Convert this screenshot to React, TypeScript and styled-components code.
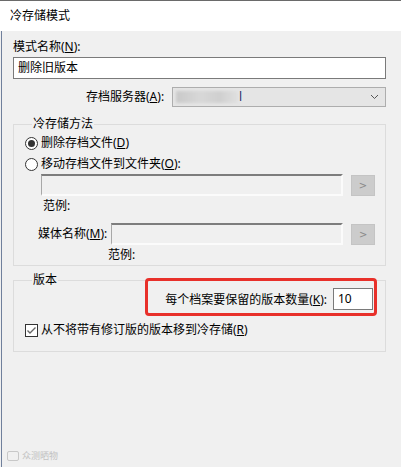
import React from "react";
import styled, { createGlobalStyle } from "styled-components";

const Global = createGlobalStyle`
  html, body { margin: 0; padding: 0; background: #f0f0f0; }
  body { font-family: "Noto Sans", "Noto Sans CJK SC", sans-serif; font-size: 12px; color: #000; }
  * { box-sizing: border-box; }
`;

const Window = styled.div`
  position: relative;
  width: 401px;
  height: 467px;
  display: flex;
  flex-direction: column;
  background: #f0f0f0;
  overflow: hidden;
`;

const TitleBar = styled.div`
  height: 31px;
  flex: none;
  background: #fff;
  border-top: 1px solid #6a6a6a;
  padding-left: 10px;
  display: flex;
  align-items: center;
  font-size: 12px;
  line-height: 16px;
`;

const Body = styled.div`
  flex: 1;
  display: flex;
  flex-direction: column;
  margin-left: 1px;
  border-left: 1px solid #70809c;
  padding: 8px 15px 0 11px;
`;

const Label = styled.div<{ $indent?: number; $mt?: number }>`
  line-height: 16px;
  padding-left: ${(p) => p.$indent ?? 0}px;
  margin-top: ${(p) => p.$mt ?? 0}px;
  white-space: nowrap;
`;

const TextInput = styled.div<{ $w?: number; $mt?: number }>`
  height: 22px;
  ${(p) => (p.$w ? `width: ${p.$w}px;` : "width: 100%;")}
  margin-top: ${(p) => p.$mt ?? 0}px;
  background: #fff;
  border: 1px solid #7a7a7a;
  padding: 0 4px;
  display: flex;
  align-items: center;
  line-height: 16px;
  font-size: 12px;
`;

const ComboRow = styled.div`
  margin-top: 8px;
  display: flex;
  align-items: center;
  gap: 4px;
  padding-left: 73px;
`;

const Combo = styled.div`
  flex: 1;
  height: 20px;
  background: #e5e5e5;
  border: 1px solid #adadad;
  display: flex;
  align-items: center;
  padding: 0 6px 0 3px;
`;

const Blurred = styled.span`
  display: inline-block;
  width: 62px;
  height: 12px;
  background: linear-gradient(90deg, #c9c9c9, #d8d8d8 40%, #cfcfcf 70%, #e0e0e0);
  filter: blur(1.5px);
`;

const ComboTail = styled.span`
  color: #1a2a66;
  font-size: 12px;
  line-height: 16px;
  margin-left: 1px;
`;

const Chevron = styled.svg`
  margin-left: auto;
  width: 9px;
  height: 6px;
`;

const Group = styled.fieldset<{ $mt: number; $pb: number }>`
  margin: ${(p) => p.$mt}px 0 0 0;
  padding: 0 10px ${(p) => p.$pb}px 11px;
  border: 1px solid #dcdcdc;
  min-width: 0;
`;

const Legend = styled.legend`
  margin-left: 7px;
  padding: 0 1px;
  line-height: 16px;
  font-size: 12px;
`;

const RadioRow = styled.label<{ $mt: number }>`
  display: flex;
  align-items: center;
  gap: 3px;
  margin-top: ${(p) => p.$mt}px;
  line-height: 16px;
`;

const Radio = styled.span<{ $checked?: boolean }>`
  width: 13px;
  height: 13px;
  border-radius: 50%;
  border: 1px solid #333;
  background: #fff;
  display: inline-flex;
  align-items: center;
  justify-content: center;
  &::after {
    content: "";
    width: 7px;
    height: 7px;
    border-radius: 50%;
    background: ${(p) => (p.$checked ? "#333" : "transparent")};
  }
`;

const FieldRow = styled.div<{ $mt: number; $pl: number }>`
  display: flex;
  align-items: center;
  margin-top: ${(p) => p.$mt}px;
  padding-left: ${(p) => p.$pl}px;
`;

const DisabledField = styled.div<{ $w: number }>`
  width: ${(p) => p.$w}px;
  height: 22px;
  background: #f0f0f0;
  border-top: 2px solid #7d7d7d;
  border-left: 1px solid #a8a8a8;
  border-right: 2px solid #fbfbfb;
  border-bottom: 2px solid #fbfbfb;
`;

const BrowseButton = styled.div`
  width: 24px;
  height: 21px;
  margin-left: 8px;
  background: #cccccc;
  border: 1px solid #c4c4c4;
  color: #8a8a8a;
  font-family: "DejaVu Sans", sans-serif;
  font-size: 10px;
  display: flex;
  align-items: center;
  justify-content: center;
`;

const InlineLabel = styled.span`
  line-height: 16px;
  margin-right: 4px;
  white-space: nowrap;
`;

const VersionRow = styled.div`
  display: flex;
  align-items: center;
  justify-content: flex-end;
  gap: 6px;
  padding-right: 2px;
`;

const CheckRow = styled.label`
  display: flex;
  align-items: center;
  gap: 3px;
  margin-top: 12px;
  line-height: 16px;
`;

const Checkbox = styled.span`
  width: 13px;
  height: 13px;
  border: 1px solid #333;
  background: #fff;
  display: inline-flex;
  align-items: center;
  justify-content: center;
`;

const Highlight = styled.div`
  position: absolute;
  left: 145px;
  top: 278px;
  width: 232px;
  height: 38px;
  border: 3.5px solid #e8302a;
  border-radius: 4px;
  pointer-events: none;
`;

const Watermark = styled.div`
  margin-top: auto;
  margin-bottom: 5px;
  margin-left: -6px;
  display: flex;
  align-items: center;
  gap: 3px;
  color: #c2c2c2;
  font-size: 9px;
  line-height: 12px;
`;

const WmIcon = styled.span`
  width: 12px;
  height: 10px;
  border: 1px solid #c8c8c8;
  border-radius: 2px;
`;

export default function App() {
  return (
    <>
      <Global />
      <Window>
        <TitleBar>冷存储模式</TitleBar>
        <Body>
          <Label>模式名称(<u>N</u>):</Label>
          <TextInput $mt={2}>删除旧版本</TextInput>
          <ComboRow>
            <InlineLabel>存档服务器(<u>A</u>):</InlineLabel>
            <Combo>
              <Blurred />
              <ComboTail>l</ComboTail>
              <Chevron viewBox="0 0 9 6">
                <path d="M1 1 L4.5 4.5 L8 1" fill="none" stroke="#555" strokeWidth="1" />
              </Chevron>
            </Combo>
          </ComboRow>

          <Group $mt={9} $pb={2}>
            <Legend>冷存储方法</Legend>
            <RadioRow $mt={3}>
              <Radio $checked />
              <span>删除存档文件(<u>D</u>)</span>
            </RadioRow>
            <RadioRow $mt={5}>
              <Radio />
              <span>移动存档文件到文件夹(<u>O</u>):</span>
            </RadioRow>
            <FieldRow $mt={2} $pl={16}>
              <DisabledField $w={302} />
              <BrowseButton>&gt;</BrowseButton>
            </FieldRow>
            <Label $indent={18} $mt={2}>范例:</Label>
            <FieldRow $mt={9} $pl={13}>
              <InlineLabel>媒体名称(<u>M</u>):</InlineLabel>
              <DisabledField $w={236} />
              <BrowseButton>&gt;</BrowseButton>
            </FieldRow>
            <Label $indent={83} $mt={2}>范例:</Label>
          </Group>

          <Group $mt={6} $pb={13}>
            <Legend>版本</Legend>
            <VersionRow>
              <span>每个档案要保留的版本数量(<u>K</u>):</span>
              <TextInput $w={40}>10</TextInput>
            </VersionRow>
            <CheckRow>
              <Checkbox>
                <svg width="11" height="11" viewBox="0 0 11 11">
                  <path d="M1.5 5.5 L4 8 L9.5 2.5" fill="none" stroke="#666" strokeWidth="1.4" />
                </svg>
              </Checkbox>
              <span>从不将带有修订版的版本移到冷存储(<u>R</u>)</span>
            </CheckRow>
          </Group>

          <Watermark>
            <WmIcon />
            <span>众测晒物</span>
          </Watermark>
        </Body>
        <Highlight />
      </Window>
    </>
  );
}
